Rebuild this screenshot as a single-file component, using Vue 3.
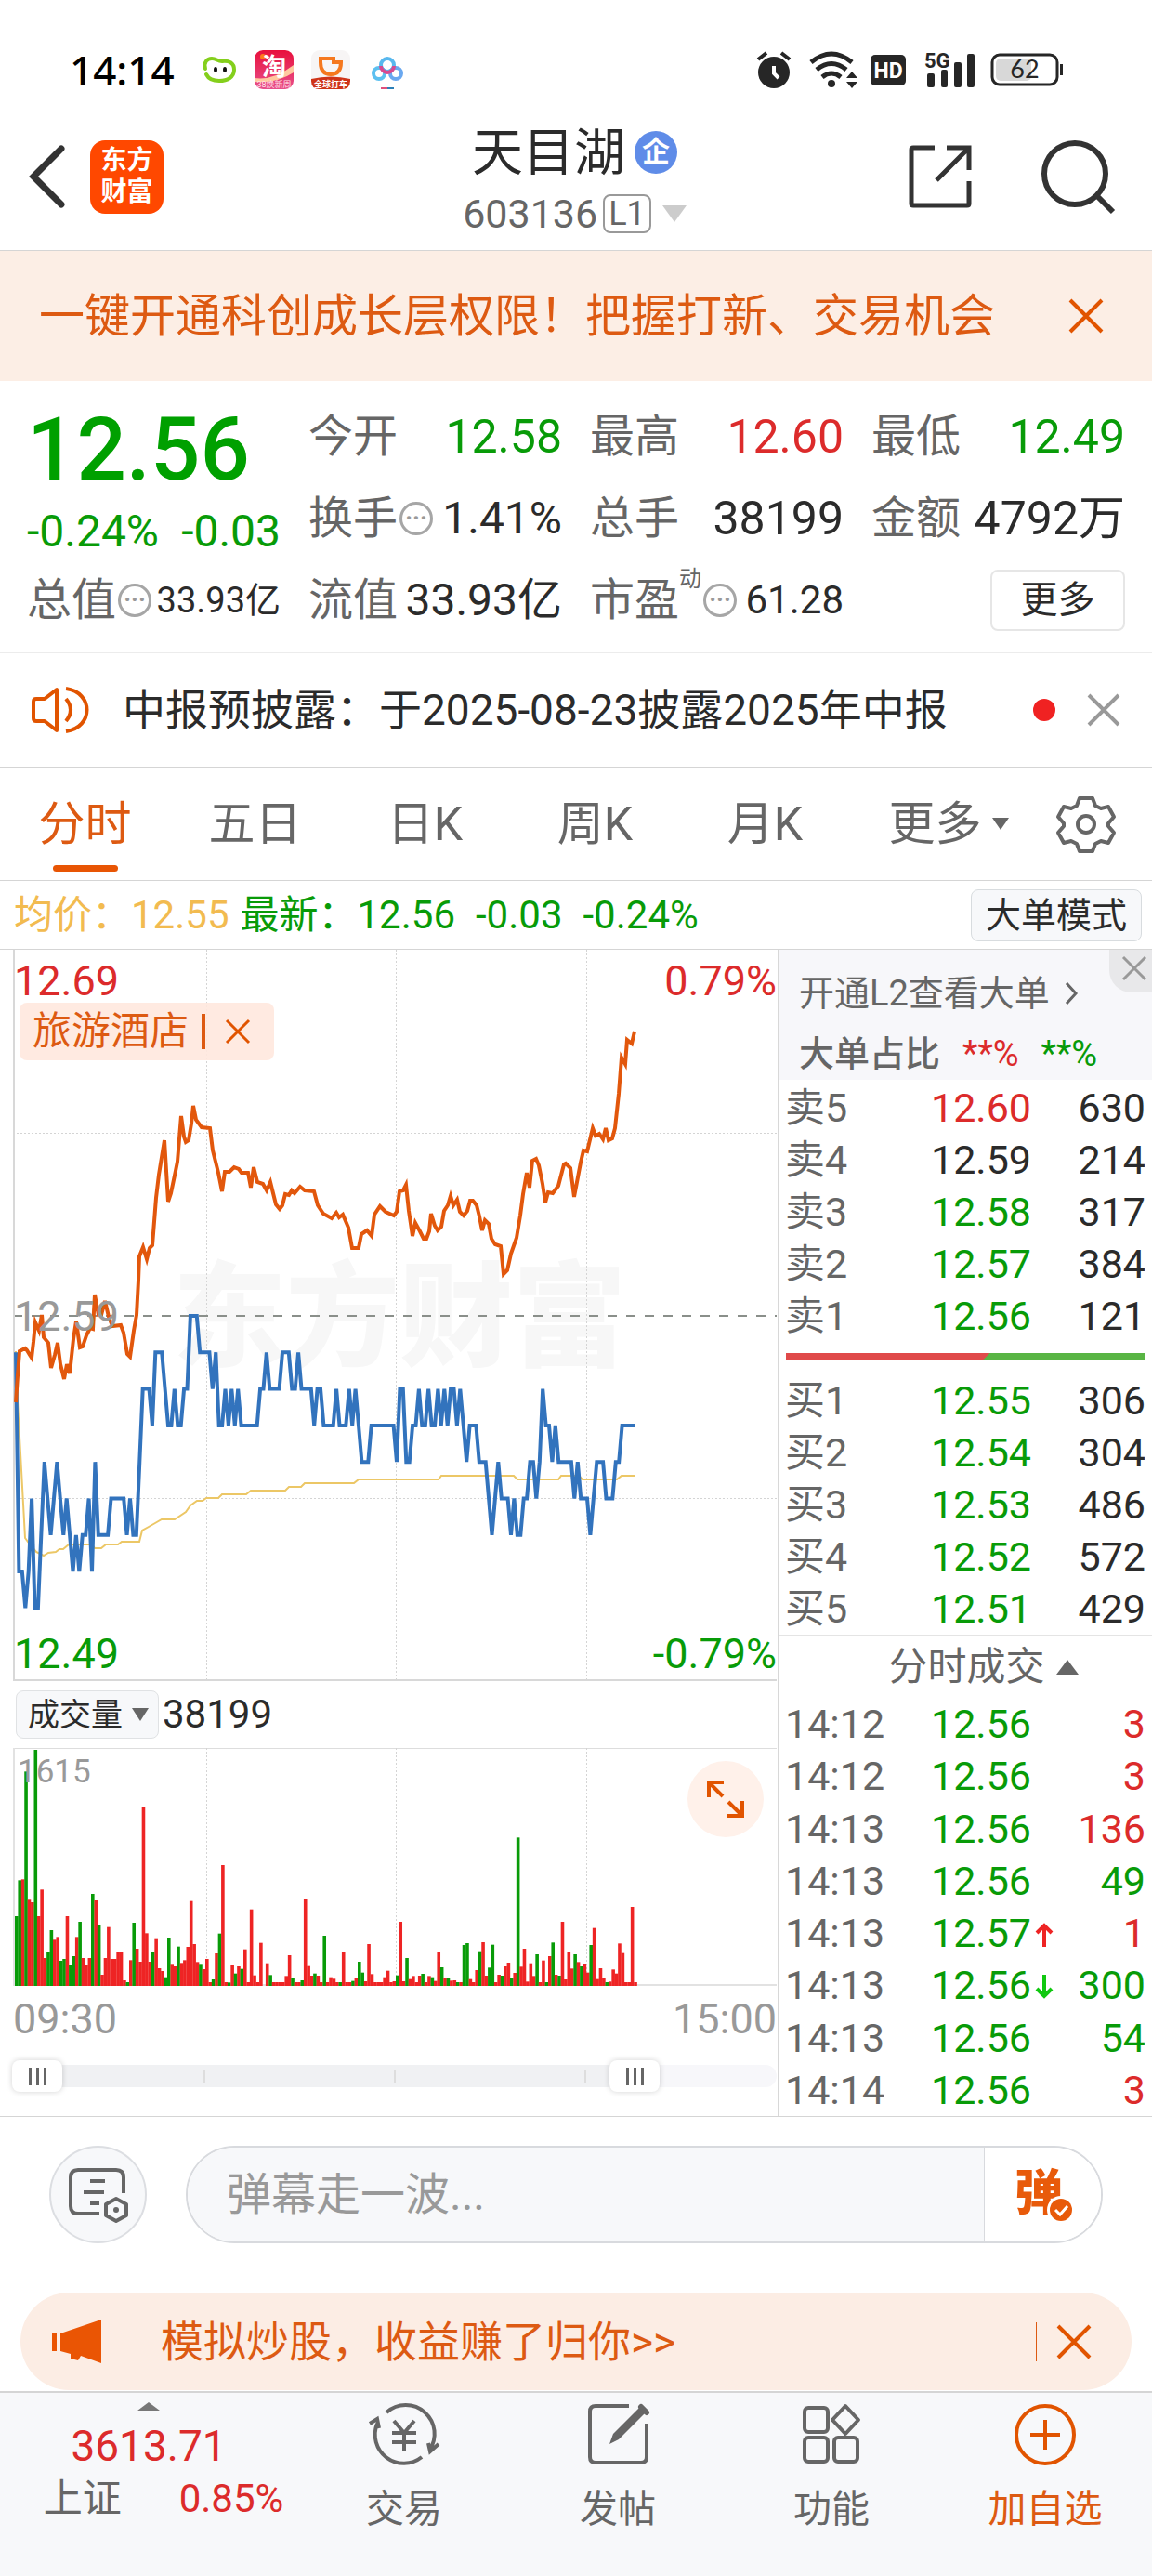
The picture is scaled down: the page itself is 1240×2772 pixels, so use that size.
<script setup>
import { ref, computed } from 'vue'

const abas = ['分时', '五日', '日K', '周K', '月K']
const abaAtiva = ref('分时')
const comentario = ref('')
const indicador = ref('成交量')
const inicio = ref(0)
const fim = ref(83.6)

const vendas = [
  { nome: '卖5', preco: '12.60', qtd: 630, cor: 'up' },
  { nome: '卖4', preco: '12.59', qtd: 214, cor: '' },
  { nome: '卖3', preco: '12.58', qtd: 317, cor: 'down' },
  { nome: '卖2', preco: '12.57', qtd: 384, cor: 'down' },
  { nome: '卖1', preco: '12.56', qtd: 121, cor: 'down' }
]
const compras = [
  { nome: '买1', preco: '12.55', qtd: 306, cor: 'down' },
  { nome: '买2', preco: '12.54', qtd: 304, cor: 'down' },
  { nome: '买3', preco: '12.53', qtd: 486, cor: 'down' },
  { nome: '买4', preco: '12.52', qtd: 572, cor: 'down' },
  { nome: '买5', preco: '12.51', qtd: 429, cor: 'down' }
]
const negocios = [
  { hora: '14:12', preco: '12.56', qtd: 3, cor: 'up' },
  { hora: '14:12', preco: '12.56', qtd: 3, cor: 'up' },
  { hora: '14:13', preco: '12.56', qtd: 136, cor: 'up' },
  { hora: '14:13', preco: '12.56', qtd: 49, cor: 'down' },
  { hora: '14:13', preco: '12.57', qtd: 1, cor: 'up', seta: 'up' },
  { hora: '14:13', preco: '12.56', qtd: 300, cor: 'down', seta: 'down' },
  { hora: '14:13', preco: '12.56', qtd: 54, cor: 'down' },
  { hora: '14:14', preco: '12.56', qtd: 3, cor: 'up' }
]

// proporção compra / venda na barra
const soma = lista => lista.reduce((t, i) => t + i.qtd, 0)
const corte = computed(() => Math.round(388 * soma(compras) / (soma(compras) + soma(vendas))))

// preço por minuto, em centavos abaixo de 12.59 (dez minutos por grupo)
const precos = [
  '1778758864', '5654565676', '7665746666', '5555565664', '2223111233',
  '2332200011', '1121332323', '2333333221', '2222111221', '2222322333',
  '3233323234', '4433333333', '4224433233', '2332323223', '2343334445',
  '6545556566', '5544542334', '3444445455', '5654445554', '433333'
].join('')

const passo = 205 / 60
const linhaPreco = computed(() =>
  precos.split('').map((n, i) => `${(3 + i * passo).toFixed(1)},${(394 + n * 39.3).toFixed(1)}`).join(' ')
)

const linhaSetor =
  '3,487 5,458 7,432 13,429 15,431 18,436 20,439 22,422 24,401 28,410 31,393 33,417 38,423 41,450 45,436 48,423 ' +
  '51,446 55,462 58,446 61,456 65,419 68,400 72,428 75,427 79,415 83,407 86,408 88,371 92,393 95,393 99,378 103,395 ' +
  '107,405 116,404 119,412 123,435 126,438 130,410 133,393 135,356 136,330 140,320 144,333 147,321 150,318 154,267 ' +
  '157,242 163,205 167,271 170,262 175,238 177,228 181,179 184,201 186,207 189,205 192,187 194,168 197,183 203,191 ' +
  '212,192 215,216 221,240 225,260 228,239 233,239 238,234 243,236 246,240 253,240 256,256 259,234 263,250 269,252 ' +
  '273,259 277,250 283,274 287,279 290,275 293,263 297,264 300,259 303,262 309,255 314,259 324,260 328,275 334,284 ' +
  '343,289 348,283 351,288 355,285 361,299 365,321 372,321 375,306 381,302 386,308 389,285 395,276 401,282 410,286 ' +
  '413,282 416,260 420,259 423,253 426,281 430,308 433,294 438,303 442,311 445,311 448,303 450,284 454,297 457,302 ' +
  '461,298 464,281 468,275 471,265 474,275 478,269 481,282 485,286 489,281 492,270 495,270 499,275 502,287 505,302 ' +
  '508,291 512,295 515,311 519,317 525,319 528,349 532,345 536,327 542,310 546,286 549,263 553,240 556,256 559,227 ' +
  '563,225 566,232 570,252 573,272 576,261 581,262 587,254 593,231 595,230 600,235 604,266 611,229 614,216 618,217 ' +
  '624,192 627,200 631,198 635,204 638,192 641,205 645,203 648,192 652,155 655,116 659,123 661,97 666,101 669,88'

const linhaMedia =
  '3,432 5,487 9,560 13,633 19,641 25,648 33,652 38,649 46,648 50,645 54,645 60,640 85,640 88,644 95,644 100,640 ' +
  '113,640 117,637 136,637 139,625 146,621 153,617 160,613 174,613 186,605 191,598 198,593 204,593 208,590 221,590 ' +
  '225,586 251,586 256,582 293,582 297,578 310,578 314,574 367,574 372,570 458,570 461,566 539,566 543,570 587,570 ' +
  '590,566 609,566 613,570 650,570 655,566 669,566'

// volume por minuto, negativo = barra verde
const volumes = [
  -225, -341, 344, -692, 278, 270, -762, 225, 311, 90, -108, -180, 149, 158, -81, -87, 225, -69, -96, 158,
  -207, 90, 69, 90, -297, 276, -195, 36, 90, 190, 87, 87, 108, 111, 18, -12, 83, -204, 120, 78,
  576, 170, 78, -108, 154, 57, 48, -28, -156, 71, 63, -127, 74, 83, 126, 274, 135, 77, -71, 54,
  87, 12, -21, 105, -169, 390, 12, -11, 69, -40, 63, -55, 118, 12, 247, 34, 12, 139, 0, 73,
  -35, 12, 12, 12, 12, 32, 99, -27, 12, 12, -18, 281, 64, 33, -40, 33, 12, -162, 12, 28,
  23, 12, -12, 111, 12, 12, -16, 24, -78, -43, 15, 135, 38, 12, 12, 12, 28, 49, 12, 15,
  -34, 207, 15, -90, 22, 32, 12, 33, -39, 12, 32, -28, 16, 110, -60, 27, -24, 17, 18, -12,
  12, -132, -138, 22, 12, 51, -112, 141, 33, -59, -133, 12, 36, -33, 63, 75, -24, 42, -479, 62,
  120, 14, 73, 32, -102, 12, 82, -12, 96, -140, 36, -33, 207, 21, 111, 56, -102, 77, -63, 72,
  43, -132, 187, 22, 57, 26, -12, 14, 53, 40, 137, 106, 12, 12, 255, 12
]
const barras = computed(() => volumes.map((v, i) => ({
  x: 2 + i * passo,
  h: Math.abs(v) / 3,
  cor: v < 0 ? '#089b08' : '#ee2424'
})))
</script>

<template>
  <div class="page">
    <div class="status">
      <span class="clock">14:14</span>
      <svg class="st-bean" width="36" height="30" viewBox="0 0 36 30" fill="none">
        <path d="M3 14C1 7 5 3 10 3c5 0 6 3 11 3 8-1 13 2 13 9 0 8-7 12-16 12C11 27 6 24 4 20" stroke="#84cf1c" stroke-width="4" stroke-linecap="round"/>
        <ellipse cx="14" cy="15" rx="2" ry="3" fill="#111"/><ellipse cx="24" cy="15" rx="2" ry="3" fill="#111"/>
      </svg>
      <svg width="42" height="42" viewBox="0 0 42 42">
        <defs><linearGradient id="tb" x1="0" y1="0" x2="0" y2="1"><stop offset="0" stop-color="#e8103c"/><stop offset="1" stop-color="#e8508c"/></linearGradient></defs>
        <rect width="42" height="42" rx="9" fill="url(#tb)"/>
        <path d="M0 30q20 3 42-14v8Q24 36 0 34z" fill="#ffc9a0"/>
        <circle cx="9" cy="7" r="3" fill="#ff7a1c"/>
        <text x="21" y="27" font-size="26" font-weight="700" fill="#fff" text-anchor="middle">淘</text>
        <text x="21" y="40" font-size="9" fill="#ffe0e8" text-anchor="middle">38焕新周</text>
      </svg>
      <svg width="42" height="42" viewBox="0 0 42 42">
        <rect width="42" height="42" rx="9" fill="#f7f5f5"/>
        <path d="M10 9h14v4h8c0 9-4 13-11 13S10 22 10 13z" fill="none" stroke="#f5781e" stroke-width="4"/>
        <path d="M0 31q21-5 42 0v2q0 9-9 9H9q-9 0-9-9z" fill="#cf3418"/>
        <text x="21" y="40" font-size="9" font-weight="700" fill="#fff" text-anchor="middle">全球打车</text>
      </svg>
      <svg width="42" height="42" viewBox="0 0 42 42" fill="none" stroke-width="4">
        <circle cx="12" cy="25" r="6" stroke="#5cc0f0"/><circle cx="30" cy="25" r="6" stroke="#6aa8f0"/>
        <circle cx="21" cy="16" r="7" stroke="#58b8ee"/><path d="M14 17a7 7 0 0 0 14 0" stroke="#d84a90"/>
        <path d="M14 41h7" stroke="#e0507c" stroke-width="2"/><path d="M21 41h7" stroke="#2c80b8" stroke-width="2"/>
      </svg>
      <span class="spacer"></span>
      <svg class="st-alarm" width="36" height="40" viewBox="0 0 36 40">
        <circle cx="18" cy="23" r="17" fill="#262626"/>
        <path d="M1 9l9-7M35 9l-9-7" stroke="#262626" stroke-width="4"/>
        <path d="M18 16v8l5 5" stroke="#fff" stroke-width="4" fill="none"/>
      </svg>
      <svg class="st-wifi" width="52" height="40" viewBox="0 0 52 40" fill="none" stroke="#262626" stroke-width="5">
        <path d="M2 12Q24-6 46 12M8 20q16-13 32 0M14 28q10-8 20 0"/>
        <circle cx="24" cy="35" r="4" fill="#262626" stroke="none"/>
        <path d="M40 29l6-7 6 7zM40 33l6 7 6-7z" fill="#262626" stroke="none"/>
      </svg>
      <svg class="st-hd" width="38" height="33" viewBox="0 0 38 33">
        <rect width="38" height="33" rx="5" fill="#262626"/>
        <text x="19" y="25" font-family="Roboto" font-size="23" font-weight="700" fill="#fff" text-anchor="middle">HD</text>
      </svg>
      <svg class="st-signal" width="54" height="40" viewBox="0 0 54 40" fill="#262626">
        <text x="0" y="18" font-family="Roboto" font-size="22" font-weight="700">5G</text>
        <rect x="3" y="24" width="8" height="15" rx="2"/><rect x="18" y="20" width="7" height="19" rx="2"/>
        <rect x="32" y="12" width="8" height="27" rx="2"/><rect x="46" y="3" width="8" height="36" rx="2"/>
      </svg>
      <svg width="80" height="36" viewBox="0 0 80 36">
        <rect x="6" y="6" width="38" height="24" rx="5" fill="#d8d8d8"/>
        <rect x="2" y="2" width="70" height="32" rx="8" fill="none" stroke="#262626" stroke-width="3"/>
        <rect x="75" y="12" width="3" height="12" fill="#262626"/>
        <text x="37" y="27" font-family="Lato" font-size="27" fill="#262626" text-anchor="middle">62</text>
      </svg>
    </div>

    <header class="header">
      <div class="head-left">
        <button class="plain" aria-label="返回">
          <svg width="38" height="66" viewBox="0 0 38 66"><path d="M35 3L5 33l30 30" fill="none" stroke="#333" stroke-width="7" stroke-linecap="round"/></svg>
        </button>
        <div class="logo"><span>东方</span><span>财富</span></div>
      </div>
      <div class="head-mid">
        <h1>天目湖<span class="badge">企</span></h1>
        <div class="code">603136<span class="level">L1</span><i class="tri-down light"></i></div>
      </div>
      <div class="head-right">
        <button class="plain" aria-label="分享">
          <svg width="68" height="68" viewBox="0 0 68 68" fill="none" stroke="#333" stroke-width="5">
            <path d="M28 3H5q-2 0-2 2v58q0 2 2 2h58q2 0 2-2V39M41 3h24v24M65 3L30 38"/>
          </svg>
        </button>
        <button class="plain" aria-label="搜索">
          <svg width="80" height="80" viewBox="0 0 80 80" fill="none" stroke="#333" stroke-width="6">
            <circle cx="37" cy="37" r="33"/><path d="M60 60l18 18"/>
          </svg>
        </button>
      </div>
    </header>

    <div class="banner">
      <a href="#">一键开通科创成长层权限！把握打新、交易机会</a>
      <button class="plain" aria-label="关闭">
        <svg width="38" height="38" viewBox="0 0 38 38"><path d="M2 2l34 34M36 2L2 36" stroke="#e15400" stroke-width="4"/></svg>
      </button>
    </div>

    <section class="quote">
      <div class="main-price down">
        <strong>12.56</strong>
        <div><span>-0.24%</span><span>-0.03</span></div>
      </div>
      <div class="cell"><label>今开</label><b class="s50 down">12.58</b></div>
      <div class="cell"><label>最高</label><b class="s50 up">12.60</b></div>
      <div class="cell"><label>最低</label><b class="s50 down">12.49</b></div>
      <div class="cell"><label>换手</label><i class="info">···</i><b>1.41%</b></div>
      <div class="cell"><label>总手</label><b class="s50">38199</b></div>
      <div class="cell"><label>金额</label><b class="s50">4792万</b></div>
      <div class="cell"><label>总值</label><i class="info">···</i><b class="s38">33.93亿</b></div>
      <div class="cell"><label>流值</label><b>33.93亿</b></div>
      <div class="cell"><label>市盈<sup>动</sup></label><i class="info">···</i><b class="s42">61.28</b></div>
      <div class="cell end"><button class="more">更多</button></div>
    </section>

    <div class="news">
      <svg width="62" height="52" viewBox="0 0 62 52" fill="none" stroke="#e15400" stroke-width="4">
        <path d="M27 4v44L14 38H5q-3 0-3-3V17q0-3 3-3h9z" stroke-linejoin="round"/>
        <path d="M37 14q10 12 0 24M37 3c30 4 30 42 0 46"/>
      </svg>
      <a href="#">中报预披露：于2025-08-23披露2025年中报</a>
      <i class="dot"></i>
      <button class="plain" aria-label="关闭">
        <svg width="36" height="36" viewBox="0 0 36 36"><path d="M2 2l32 32M34 2L2 34" stroke="#999" stroke-width="4"/></svg>
      </button>
    </div>

    <nav class="tabs">
      <button v-for="a in abas" :key="a" class="tab" :class="{ active: a === abaAtiva }" @click="abaAtiva = a">{{ a }}</button>
      <button class="tab">更多<i class="tri-down small"></i></button>
      <button class="plain gear" aria-label="设置">
        <svg width="62" height="62" viewBox="0 0 62 62" fill="none" stroke="#666" stroke-width="4" stroke-linejoin="round">
          <path d="M24 3h14l3 8 6 3 8-2 6 11-6 7v3l6 7-6 11-8-2-6 3-3 8H24l-3-8-6-3-8 2-6-11 6-7v-3l-6-7 6-11 8 2 6-3z"/>
          <circle cx="31" cy="31" r="9"/>
        </svg>
      </button>
    </nav>

    <div class="summary">
      <span class="avg">均价：12.55</span>
      <span class="down">最新：12.56</span>
      <span class="down">-0.03</span>
      <span class="down">-0.24%</span>
      <button class="mode">大单模式</button>
    </div>

    <main class="market">
      <div class="charts">
        <div class="price-chart">
          <svg class="plot" height="787" viewBox="0 0 822 787" preserveAspectRatio="none">
            <text class="mark" x="172" y="438">东方财富</text>
            <g stroke="#d4d4d4" stroke-width="1" stroke-dasharray="2 2">
              <path d="M0 197.500H822M0 590.500H822M208.500 0V786M412.500 0V786M617.500 0V786"/>
            </g>
            <path d="M0 394H822" stroke="#8a8f8a" stroke-width="2" stroke-dasharray="10 10"/>
            <path d="M1 0V786H822" fill="none" stroke="#d8d8d8" stroke-width="2"/>
            <polyline :points="linhaMedia" fill="none" stroke="#ecc766" stroke-width="2"/>
            <polyline :points="linhaPreco" fill="none" stroke="#3273bd" stroke-width="4"/>
            <polyline :points="linhaSetor" fill="none" stroke="#e2570c" stroke-width="4"/>
          </svg>
          <span class="axis tl up">12.69</span>
          <span class="axis tr up">0.79%</span>
          <span class="axis ml">12.59</span>
          <span class="axis bl down">12.49</span>
          <span class="axis br down">-0.79%</span>
          <button class="sector">旅游酒店<i></i>
            <svg width="26" height="26" viewBox="0 0 26 26"><path d="M1 1l24 24M25 1L1 25" stroke="#e15400" stroke-width="3"/></svg>
          </button>
        </div>

        <div class="vol-head">
          <div class="pick">
            <select v-model="indicador" aria-label="指标"><option>成交量</option></select>
            <i class="tri-down"></i>
          </div>
          <span>38199</span>
        </div>

        <div class="vol-chart">
          <svg class="plot" height="256" viewBox="0 0 822 256" preserveAspectRatio="none">
            <path d="M0 .5H822" stroke="#ddd"/>
            <path d="M208.500 0V255M412.500 0V255M617.500 0V255" stroke="#d4d4d4" stroke-dasharray="2 2"/>
            <path d="M1 0V255H822" fill="none" stroke="#e2e2e2" stroke-width="2"/>
            <rect v-for="(b, i) in barras" :key="i" :x="b.x" :y="256 - b.h" width="3.600" :height="b.h" :fill="b.cor"/>
          </svg>
          <span class="vol-max">1615</span>
          <button class="expand" aria-label="全屏">
            <svg width="40" height="40" viewBox="0 0 40 40" fill="none" stroke="#e15400" stroke-width="4">
              <path d="M18 2H2v16M2 2l15 15M22 38h16V22M38 38L23 23"/>
            </svg>
          </button>
        </div>

        <div class="times"><span>09:30</span><span>15:00</span></div>

        <div class="range">
          <div class="track">
            <div class="fill" :style="{ width: fim + '%' }"></div>
            <i></i><i></i><i></i><i></i>
          </div>
          <input v-model="inicio" type="range" min="0" max="100" step="0.1" aria-label="开始时间">
          <input v-model="fim" type="range" min="0" max="100" step="0.1" aria-label="结束时间">
        </div>
      </div>

      <aside class="book">
        <div class="level2">
          <a href="#">开通L2查看大单
            <svg width="14" height="26" viewBox="0 0 14 26"><path d="M2 2l10 11L2 24" fill="none" stroke="#666" stroke-width="3"/></svg>
          </a>
          <div class="ratio"><b>大单占比</b><span class="up">**%</span><span class="down">**%</span></div>
          <button class="close" aria-label="关闭">
            <svg width="26" height="26" viewBox="0 0 26 26"><path d="M1 1l24 24M25 1L1 25" stroke="#999" stroke-width="3"/></svg>
          </button>
        </div>
        <table class="asks">
          <tbody>
            <tr v-for="v in vendas" :key="v.nome">
              <th>{{ v.nome }}</th><td :class="v.cor">{{ v.preco }}</td><td>{{ v.qtd }}</td>
            </tr>
          </tbody>
        </table>
        <svg class="balance" height="7" viewBox="0 0 388 7" preserveAspectRatio="none">
          <rect width="388" height="7" fill="#59b544"/>
          <path :d="`M0 0H${corte + 4}L${corte - 3} 7H0z`" fill="#e04a4a"/>
        </svg>
        <table>
          <tbody>
            <tr v-for="c in compras" :key="c.nome">
              <th>{{ c.nome }}</th><td :class="c.cor">{{ c.preco }}</td><td>{{ c.qtd }}</td>
            </tr>
          </tbody>
        </table>
        <button class="deals-title">分时成交<i class="tri-up"></i></button>
        <table class="deals">
          <tbody>
            <tr v-for="(n, i) in negocios" :key="i">
              <th>{{ n.hora }}</th>
              <td class="down">{{ n.preco }}<svg v-if="n.seta" width="20" height="26" viewBox="0 0 20 26" fill="none" :stroke="n.seta === 'up' ? '#ee2424' : '#10c810'" stroke-width="4">
                <path v-if="n.seta === 'up'" d="M10 26V3M2 11l8-8 8 8"/>
                <path v-else d="M10 0v23M2 15l8 8 8-8"/>
              </svg></td>
              <td :class="n.cor">{{ n.qtd }}</td>
            </tr>
          </tbody>
        </table>
      </aside>
    </main>

    <div class="comment">
      <button class="round" aria-label="弹幕设置">
        <svg width="66" height="60" viewBox="0 0 66 60" fill="none" stroke="#666" stroke-width="4">
          <path d="M34 50H11q-8 0-8-8V11q0-8 8-8h41q8 0 8 8v17M24 15h16M17 27h22M24 39h10"/>
          <path d="M52 34l11 6v12l-11 6-11-6V40z" stroke-linejoin="round"/><circle cx="52" cy="46" r="3" fill="#666" stroke="none"/>
        </svg>
      </button>
      <div class="pill">
        <input v-model="comentario" type="text" placeholder="弹幕走一波..." aria-label="弹幕">
        <button aria-label="弹幕开关">
          <svg width="66" height="60" viewBox="0 0 66 60">
            <text x="0" y="46" font-size="52" font-weight="900" fill="#e85a0a">弹</text>
            <circle cx="50" cy="46" r="15" fill="#fff"/><circle cx="50" cy="46" r="12" fill="#e85a0a"/>
            <path d="M44 46l5 5 8-9" fill="none" stroke="#fff" stroke-width="3"/>
          </svg>
        </button>
      </div>
    </div>

    <div class="promo">
      <svg width="56" height="48" viewBox="0 0 56 48" fill="#ea5504">
        <path d="M0 15h5v19H0zM9 15L53 0v47l-22-8-3 5-8-2v-5L9 34z"/>
      </svg>
      <a href="#">模拟炒股，收益赚了归你&gt;&gt;</a>
      <i class="bar"></i>
      <button class="plain" aria-label="关闭">
        <svg width="38" height="38" viewBox="0 0 38 38"><path d="M2 2l34 34M36 2L2 36" stroke="#e15400" stroke-width="4"/></svg>
      </button>
    </div>

    <footer class="bottom">
      <a href="#" class="index">
        <i class="tri-up tiny"></i>
        <span class="points up">3613.71</span>
        <span class="line"><span>上证</span><span class="up">0.85%</span></span>
      </a>
      <a href="#" class="item">
        <svg width="78" height="68" viewBox="0 0 78 68" fill="none" stroke="#666" stroke-width="4">
          <path d="M20 10a31 31 0 0 1 46 41M58 58A31 31 0 0 1 10 22M2 22l8-5 2 10M76 44l-9 8-2-9"/>
          <path d="M28 19l11 13 11-13M39 32v19M26 32h26M26 42h26"/>
        </svg>
        <span>交易</span>
      </a>
      <a href="#" class="item">
        <svg width="66" height="68" viewBox="0 0 66 68" fill="none" stroke="#666" stroke-width="4">
          <path d="M45 3H9q-6 0-6 6v49q0 6 6 6h49q6 0 6-6V22"/>
          <path d="M24 44l4-11L56 5l6 6-28 28z" fill="#666" stroke="none"/><path d="M58 4l6 6" stroke-width="6" stroke-linecap="round"/>
        </svg>
        <span>发帖</span>
      </a>
      <a href="#" class="item">
        <svg width="62" height="68" viewBox="0 0 62 68" fill="none" stroke="#666" stroke-width="4">
          <rect x="2" y="5" width="25" height="26" rx="4"/><rect x="2" y="37" width="25" height="26" rx="4"/>
          <rect x="34" y="37" width="25" height="26" rx="4"/><path d="M46 3l14 15-14 15-14-15z" stroke-linejoin="round"/>
        </svg>
        <span>功能</span>
      </a>
      <a href="#" class="item add">
        <svg width="68" height="68" viewBox="0 0 68 68" fill="none" stroke="#e15400" stroke-width="4">
          <circle cx="34" cy="34" r="31"/><path d="M34 18v32M18 34h32"/>
        </svg>
        <span>加自选</span>
      </a>
    </footer>
  </div>
</template>

<style>
body { margin: 0; background: #fff; }
</style>

<style scoped>
* { box-sizing: border-box; }

.page {
  font-family: Roboto, "Noto Sans CJK SC", sans-serif;
  line-height: 1;
  color: #2b2b2b;
  background: #fff;
}
svg { display: block; flex: none; overflow: visible; }
button, input, select {
  font-family: inherit;
  line-height: inherit;
  color: inherit;
  border: 0;
  padding: 0;
  background: none;
}
a { color: inherit; text-decoration: none; }
.plain { display: block; }
.up { color: #dc2b2b; }
.down { color: #089b08; }

.tri-down, .tri-up {
  display: inline-block;
  border: 9px solid transparent;
  border-bottom-width: 0;
  border-top: 14px solid #666;
}
.tri-down.light { border-width: 18px 13px 0; border-top-color: #ccc; margin-left: 12px; }
.tri-down.small { border-width: 13px 9px 0; }
.tri-up { border-color: transparent transparent #666; border-width: 0 12px 16px; }
.tri-up.tiny { border-width: 0 12px 9px; border-bottom-color: #777; }

/* barra de status */
.status {
  display: flex;
  align-items: center;
  height: 111px;
  padding: 39px 94px 0 75px;
}
.clock {
  font: 500 44px "Noto Sans", sans-serif;
  color: #000;
  margin-right: 30px;
}
.st-bean { margin-right: 20px; }
.status svg + svg { margin-right: 19px; }
.spacer { flex: 1; }
.st-alarm { margin-right: 20px; }
.status .st-wifi { margin-right: 14px; }
.status .st-hd { margin-right: 20px; }
.status .st-signal { margin-right: 17px; }
.status svg:last-child { margin-right: 0; }

/* cabeçalho */
.header {
  display: grid;
  grid-template-columns: 1fr auto 1fr;
  align-items: center;
  height: 159px;
  padding: 0 40px 0 31px;
  border-bottom: 1px solid #d5d5d5;
}
.head-left { display: flex; align-items: center; gap: 28px; }
.logo {
  display: flex;
  flex-direction: column;
  justify-content: center;
  width: 79px;
  height: 79px;
  border-radius: 16px;
  background: #ff4800;
  color: #fff;
  font-size: 28px;
  font-weight: 700;
  line-height: 34px;
  text-align: center;
}
.head-mid { padding: 14px 0 0 6px; }
h1 {
  display: flex;
  align-items: center;
  justify-content: center;
  gap: 10px;
  margin: 0;
  font-size: 55px;
  font-weight: 400;
  line-height: 66px;
}
.badge {
  width: 46px;
  height: 46px;
  border-radius: 50%;
  background: #5f8ce8;
  color: #fff;
  font-size: 30px;
  font-weight: 700;
  line-height: 44px;
  text-align: center;
}
.code {
  display: flex;
  align-items: center;
  justify-content: center;
  font-size: 43px;
  line-height: 66px;
  color: #666;
}
.level {
  margin-left: 6px;
  padding: 0 4px;
  border: 2px solid #999;
  border-radius: 8px;
  font-size: 36px;
  line-height: 38px;
}
.head-right { display: flex; align-items: center; justify-content: flex-end; gap: 74px; }

.banner {
  display: flex;
  align-items: center;
  justify-content: space-between;
  height: 140px;
  padding: 0 52px 0 42px;
  background: #fceee5;
  color: #dd5a12;
  font-size: 49px;
}

/* cotação */
.quote {
  display: grid;
  grid-template-columns: repeat(4, 1fr);
  grid-auto-rows: 88px;
  column-gap: 30px;
  padding: 16px 29px 12px;
  border-bottom: 1px solid #ececec;
  font-size: 48px;
}
.main-price { grid-row: span 2; }
.main-price strong {
  display: block;
  font-size: 94px;
  font-weight: 500;
  line-height: 116px;
  color: #00a000;
}
.main-price div { display: flex; justify-content: space-between; line-height: 60px; }
.cell { display: flex; align-items: center; }
.cell label { position: relative; color: #666; }
.cell b { margin-left: auto; font-weight: 400; }
.cell.end { justify-content: flex-end; }
.s38 { font-size: 38px; }
.s42 { font-size: 42px; }
.s50 { font-size: 50px; }
.cell sup {
  position: absolute;
  left: 100%;
  top: -14px;
  font-size: 24px;
  line-height: 30px;
}
label:has(sup) + .info { margin-left: 26px; }
.info {
  flex: none;
  width: 36px;
  height: 36px;
  margin-left: 2px;
  border: 3px solid #a6a6a6;
  border-radius: 50%;
  color: #999;
  font: 700 26px/28px Roboto, sans-serif;
  text-align: center;
}
.more {
  width: 145px;
  height: 66px;
  border: 2px solid #e6e6e6;
  border-radius: 8px;
  font-size: 40px;
}

.news {
  display: flex;
  align-items: center;
  height: 123px;
  padding: 0 34px;
  border-bottom: 1px solid #d5d5d5;
  font-size: 46px;
}
.news a { flex: 1; margin-left: 36px; }
.dot { width: 24px; height: 24px; margin-right: 34px; border-radius: 50%; background: #f02222; }

.tabs {
  display: flex;
  align-items: center;
  height: 122px;
  border-bottom: 1px solid #d5d5d5;
}
.tab {
  position: relative;
  flex: 183;
  height: 100%;
  font-size: 50px;
  color: #666;
}
.tab i { position: absolute; top: 54px; right: 12px; }
.tab.active { color: #dd5a12; }
.tab.active::after {
  content: "";
  position: absolute;
  left: 50%;
  bottom: 9px;
  width: 70px;
  height: 7px;
  margin-left: -35px;
  border-radius: 4px;
  background: #e85504;
}
.gear { flex: 142; display: flex; justify-content: center; }

.summary {
  display: flex;
  align-items: center;
  gap: 22px;
  height: 74px;
  padding: 0 11px 0 15px;
  border-bottom: 1px solid #d5d5d5;
  font-size: 42px;
}
.avg { margin-right: -10px; color: #f2bb50; }
.mode {
  margin-left: auto;
  width: 184px;
  height: 56px;
  border: 1px solid #d8dcdf;
  border-radius: 8px;
  background: #f7f8fa;
  font-size: 38px;
}

/* gráficos */
.market {
  display: flex;
  border-bottom: 1px solid #d5d5d5;
}
.charts { flex: 1; min-width: 0; padding: 0 1px 0 14px; }
.plot { width: 100%; }
.price-chart, .vol-chart { position: relative; }
.mark { font-size: 122px; font-weight: 900; fill: #f7f7f7; }
.axis { position: absolute; font-size: 45px; line-height: 50px; }
.tl { left: 1px; top: 9px; }
.tr { right: 0; top: 9px; }
.ml { left: 1px; top: 370px; color: #999; }
.bl { left: 1px; bottom: 4px; }
.br { right: 0; bottom: 4px; }
.sector {
  position: absolute;
  left: 7px;
  top: 57px;
  display: flex;
  align-items: center;
  height: 62px;
  padding: 0 26px 0 14px;
  border-radius: 8px;
  background: rgba(255, 232, 222, 0.9);
  color: #dd5a12;
  font-size: 42px;
}
.sector i { width: 4px; height: 38px; margin: 0 22px 0 14px; background: #dd5a12; }

.vol-head { display: flex; align-items: center; gap: 4px; height: 72px; padding-left: 3px; font-size: 42px; }
.pick {
  display: flex;
  align-items: center;
  position: relative;
  width: 154px;
  height: 52px;
  border: 1px solid #e0e2e4;
  border-radius: 8px;
  background: #f7f8fa;
}
.pick select { appearance: none; width: 100%; height: 100%; padding-left: 12px; font-size: 34px; }
.pick i { position: absolute; right: 10px; pointer-events: none; }
.vol-max { position: absolute; left: 5px; top: 6px; font-size: 35px; line-height: 40px; color: #999; }
.expand {
  position: absolute;
  right: 14px;
  top: 14px;
  display: flex;
  align-items: center;
  justify-content: center;
  width: 82px;
  height: 82px;
  border-radius: 50%;
  background: #fff1ea;
}
.times {
  display: flex;
  justify-content: space-between;
  height: 72px;
  font-size: 45px;
  line-height: 72px;
  color: #999;
}
.range { position: relative; height: 50px; padding-top: 13px; margin-left: -1px; }
.track {
  position: relative;
  display: flex;
  height: 24px;
  padding-left: 3px;
  border-radius: 12px;
  background: #f7f7fa;
  overflow: hidden;
}
.track i { flex: 1; z-index: 1; height: 14px; margin-top: 5px; border-right: 2px solid #ddd; }
.track i:last-child { border-color: transparent; }
.fill { position: absolute; top: 0; left: 0; height: 100%; background: #f0f1f3; }
.range input {
  appearance: none;
  position: absolute;
  left: 0;
  top: 0;
  width: 100%;
  height: 50px;
  margin: 0;
  pointer-events: none;
}
.range input::-webkit-slider-thumb {
  appearance: none;
  width: 54px;
  height: 34px;
  border-radius: 8px;
  background:
    linear-gradient(#666, #666) 18px 8px / 3px 19px no-repeat,
    linear-gradient(#666, #666) 26px 8px / 3px 19px no-repeat,
    linear-gradient(#666, #666) 34px 8px / 3px 19px no-repeat,
    #fff;
  box-shadow: 0 0 6px rgba(0, 0, 0, 0.18);
  pointer-events: auto;
}

/* livro de ofertas */
.book {
  width: 403px;
  border-left: 2px solid #d8d8d8;
  font-size: 43px;
}
.level2 {
  position: relative;
  height: 140px;
  padding: 14px 0 0 21px;
  background: #f7f7fa;
  color: #666;
  font-size: 38px;
  line-height: 66px;
}
.level2 a { display: flex; align-items: center; gap: 16px; }
.ratio { display: flex; gap: 24px; line-height: 64px; }
.ratio b { font-weight: 500; }
.close {
  position: absolute;
  right: 0;
  top: 0;
  display: flex;
  align-items: center;
  justify-content: flex-end;
  width: 46px;
  height: 46px;
  padding: 0 6px 6px 0;
  border-bottom-left-radius: 24px;
  background: #e8e8ea;
}
.book table {
  width: 100%;
  padding: 0 7px 0 6px;
  border-spacing: 0;
  table-layout: fixed;
}
.book th, .book td { height: 56px; padding: 0; line-height: 54px; white-space: nowrap; }
.book th { width: 157px; font-weight: 400; text-align: left; color: #666; }
.book td:last-child { width: 90px; text-align: right; }
.book td svg { display: inline-block; margin-left: 4px; }
.asks { margin-top: 2px; }
.balance { width: calc(100% - 14px); margin: 12px 7px 16px; }
.deals-title {
  display: flex;
  align-items: center;
  justify-content: center;
  gap: 12px;
  width: 100%;
  height: 68px;
  padding-left: 38px;
  border-top: 1px solid #e4e4e4;
  color: #666;
  font-size: 42px;
}
.book .deals { height: 450px; }

/* comentários */
.comment { display: flex; gap: 42px; padding: 31px 53px 53px; }
.round {
  display: flex;
  align-items: center;
  justify-content: center;
  width: 105px;
  height: 105px;
  border: 2px solid #dcdee2;
  border-radius: 50%;
  background: #f7f8fa;
}
.pill {
  display: flex;
  flex: 1;
  height: 105px;
  border: 2px solid #d8dade;
  border-radius: 53px;
  overflow: hidden;
}
.pill input { flex: 1; min-width: 0; padding-left: 42px; background: #f7f8fa; font-size: 48px; }
.pill input::placeholder { color: #999; }
.pill button { width: 126px; padding-left: 32px; border-left: 1px solid #d8dade; background: #fff; }

.promo {
  display: flex;
  align-items: center;
  height: 105px;
  margin: 0 22px 1px;
  padding: 0 43px 0 34px;
  border-radius: 53px;
  background: #fcede4;
  color: #dd5a12;
  font-size: 46px;
}
.promo a { flex: 1; margin-left: 61px; }
.bar { width: 1px; height: 42px; margin-right: 21px; background: #dd5a12; }

.bottom {
  display: flex;
  height: 199px;
  border-top: 2px solid #d5d5d5;
  background: #f7f8fa;
  color: #666;
}
.index {
  display: flex;
  flex-direction: column;
  align-items: center;
  flex: 320;
  padding-top: 10px;
  font-size: 42px;
}
.points { margin-top: 10px; font-size: 46px; line-height: 56px; }
.line { display: flex; align-items: center; gap: 62px; padding-left: 32px; line-height: 58px; }
.item {
  display: flex;
  flex-direction: column;
  align-items: center;
  flex: 230;
  padding-top: 11px;
  font-size: 41px;
  line-height: 60px;
}
.item span { margin-top: 16px; }
.add { color: #dd5a12; }
</style>
